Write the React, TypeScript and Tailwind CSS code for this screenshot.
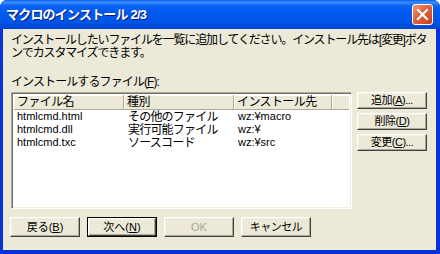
import React from "react";

const font = "[font-family:'Liberation_Sans','Noto_Sans_CJK_JP',sans-serif]";

function Btn({ children, def, disabled, className = "" }: { children: React.ReactNode; def?: boolean; disabled?: boolean; className?: string }) {
  const inner = (
    <div
      className={`flex items-center justify-center w-full h-full bg-[#ECE9D8] border border-t-white border-l-white border-r-[#404040] border-b-[#404040] shadow-[inset_-1px_-1px_0_#ACA899,inset_1px_1px_0_#F1EFE2] text-[11px] leading-none ${disabled ? "text-[#ACA899]" : "text-black"}`}
    >
      {children}
    </div>
  );
  if (def) {
    return <div className={`border border-black ${className}`}>{inner}</div>;
  }
  return <div className={className}>{inner}</div>;
}

function U({ c }: { c: string }) {
  return <span className="underline underline-offset-1">{c}</span>;
}

function HeaderCell({ children, w }: { children?: React.ReactNode; w: string }) {
  return (
    <div className={`${w} h-full flex items-center pl-[3px] border-r border-r-[#ACA899] shadow-[inset_1px_1px_0_#FFFFFF] text-[12px] tracking-[-0.6px] whitespace-nowrap overflow-hidden`}>
      {children}
    </div>
  );
}

const rows = [
  ["htmlcmd.html", "その他のファイル", "wz:¥macro"],
  ["htmlcmd.dll", "実行可能ファイル", "wz:¥"],
  ["htmlcmd.txc", "ソースコード", "wz:¥src"],
];

export default function App() {
  return (
    <div className={`w-[440px] h-[254px] ${font} flex flex-col bg-[#0831D9] rounded-t-[7px] overflow-hidden`}>
      {/* title bar */}
      <div className="h-[29px] flex items-center pl-[6px] pr-[7px] bg-[linear-gradient(to_bottom,#0A5FF0_0%,#3C8EF8_8%,#0B61F2_20%,#0058EE_45%,#0055E8_75%,#0046D2_100%)]">
        <div className="flex-1 text-white font-bold text-[13px] tracking-[-0.8px] [text-shadow:1px_1px_0_#0A1E6E] whitespace-nowrap pt-[1px]">
          マクロのインストール 2/3
        </div>
        <div className="w-[21px] h-[21px] rounded-[3px] border border-white bg-[linear-gradient(135deg,#F09878_0%,#E0603A_45%,#C8401C_100%)] flex items-center justify-center">
          <svg width="13" height="13" viewBox="0 0 13 13">
            <path d="M2 2 L11 11 M11 2 L2 11" stroke="white" strokeWidth="2.2" strokeLinecap="square" />
          </svg>
        </div>
      </div>
      {/* client */}
      <div className="flex-1 mx-[3px] mr-[4px] mb-[4px] bg-[#ECE9D8] flex flex-col text-black">
        <div className="pl-[8px] pt-[5px] text-[12px] leading-[13px] tracking-[-1.15px] whitespace-nowrap">
          <div>インストールしたいファイルを一覧に追加してください。インストール先は[変更]ボタ</div>
          <div>ンでカスタマイズできます。</div>
        </div>
        <div className="pl-[8px] mt-[16px] text-[12px] leading-[13px] tracking-[-0.9px] whitespace-nowrap">
          インストールするファイル(<U c="F" />):
        </div>
        <div className="flex mt-[3px] pl-[8px]">
          {/* list */}
          <div className="w-[341px] h-[117px] bg-white border border-t-[#ACA899] border-l-[#ACA899] border-r-white border-b-white shadow-[inset_1px_1px_0_#716F64,inset_-1px_-1px_0_#F1EFE2] p-[2px] flex flex-col">
            <div className="h-[15px] flex bg-[#ECE9D8] border-b border-b-[#ACA899]">
              <HeaderCell w="w-[110px]">ファイル名</HeaderCell>
              <HeaderCell w="w-[110px]">種別</HeaderCell>
              <HeaderCell w="w-[98px]">インストール先</HeaderCell>
              <div className="flex-1 shadow-[inset_1px_1px_0_#FFFFFF]" />
            </div>
            <div>
              {rows.map((r) => (
                <div key={r[0]} className="flex h-[13px] items-center text-[12px] leading-none">
                  <div className="w-[110px] pl-[3px] text-[11px]">{r[0]}</div>
                  <div className="w-[110px] pl-[4px] tracking-[-0.8px]">{r[1]}</div>
                  <div className="w-[98px] pl-[4px] text-[11px]">{r[2]}</div>
                </div>
              ))}
            </div>
          </div>
          {/* side buttons */}
          <div className="ml-[5px] flex flex-col gap-[4px]">
            <Btn className="w-[70px] h-[17px]">
              <span className="tracking-[-0.5px]">追加(<U c="A" />)...</span>
            </Btn>
            <Btn className="w-[70px] h-[17px]">
              <span className="tracking-[-0.5px]">削除(<U c="D" />)</span>
            </Btn>
            <Btn className="w-[70px] h-[17px]">
              <span className="tracking-[-0.5px]">変更(<U c="C" />)...</span>
            </Btn>
          </div>
        </div>
        {/* bottom buttons */}
        <div className="flex pl-[7px] mt-[8px] gap-[7px]">
          <Btn className="w-[70px] h-[20px]">
            <span>戻る(<U c="B" />)</span>
          </Btn>
          <Btn def className="w-[70px] h-[20px]">
            <span>次へ(<U c="N" />)</span>
          </Btn>
          <Btn disabled className="w-[70px] h-[20px]">
            <span>OK</span>
          </Btn>
          <Btn className="w-[70px] h-[20px]">
            <span className="tracking-[-0.5px]">キャンセル</span>
          </Btn>
        </div>
      </div>
    </div>
  );
}
